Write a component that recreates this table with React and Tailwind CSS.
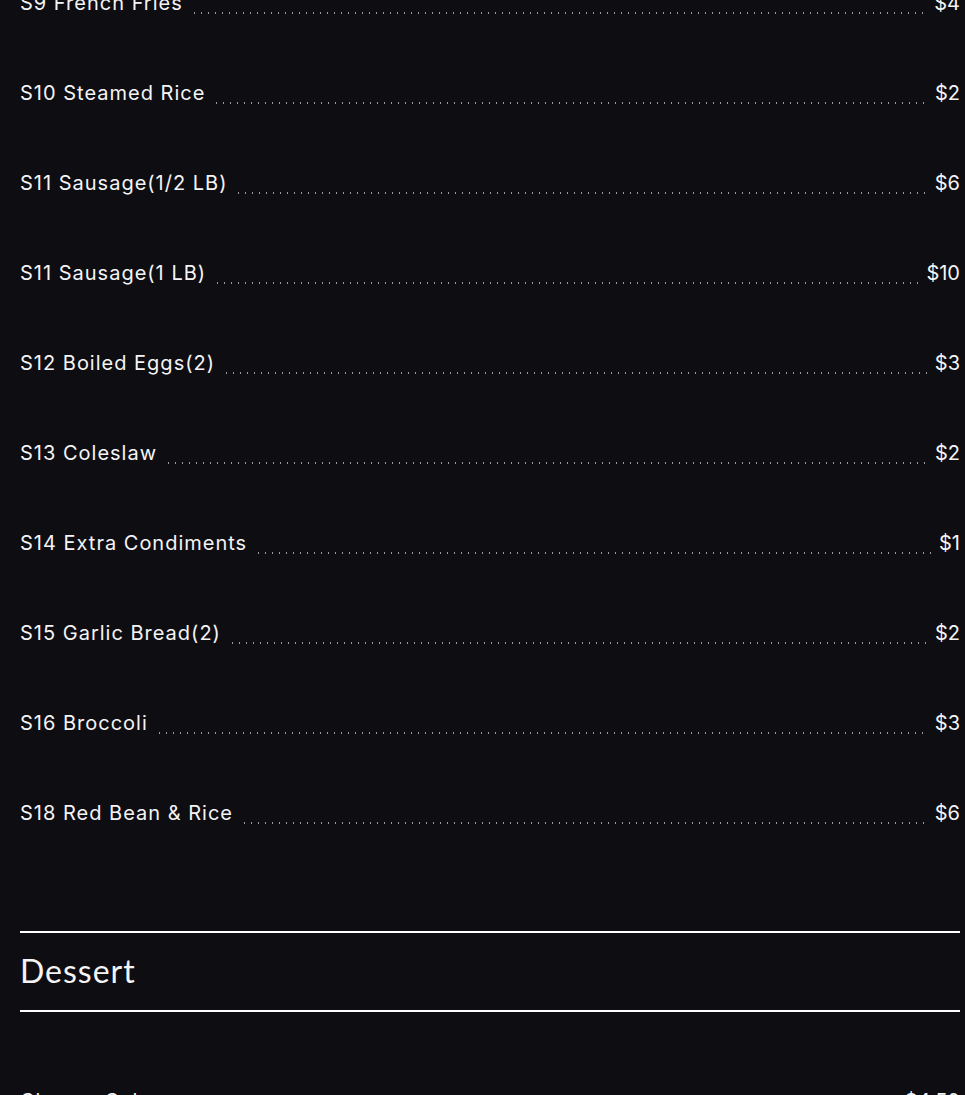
import React from 'react';

const sides = [
    { name: "S9 French Fries", price: "$4" },
    { name: "S10 Steamed Rice", price: "$2" },
    { name: "S11 Sausage(1/2 LB)", price: "$6" },
    { name: "S11 Sausage(1 LB)", price: "$10" },
    { name: "S12 Boiled Eggs(2)", price: "$3" },
    { name: "S13 Coleslaw", price: "$2" },
    { name: "S14 Extra Condiments", price: "$1" },
    { name: "S15 Garlic Bread(2)", price: "$2" },
    { name: "S16 Broccoli", price: "$3" },
    { name: "S18 Red Bean & Rice", price: "$6" },
];

const MenuRow = ({ name, price }) => (
    <div className="flex items-baseline h-[28px] leading-[28px] text-[20px] text-[#f4f4f5]">
        <span className="whitespace-nowrap tracking-[1px]">{name}</span>
        {/* dotted leader */}
        <div className="flex-1 mx-2 h-[2px] translate-y-[4px] bg-[radial-gradient(circle,#9a9a9f_0.75px,transparent_0.95px)] bg-[length:7px_2px] bg-repeat-x"></div>
        <span className="whitespace-nowrap">{price}</span>
    </div>
);

const App = () => {
    return (
        <div className="h-[1095px] overflow-hidden bg-[#0e0d12] font-['Inter',sans-serif]">
            <div className="pl-5 pr-[5px] -mt-[11px]">
                <div className="flex flex-col gap-[62px]">
                    {sides.map((item) => (
                        <MenuRow key={item.name} {...item} />
                    ))}
                </div>

                {/* Dessert section */}
                <div className="mt-[104px] border-t-2 border-b-2 border-white h-[81px] flex items-center">
                    <h2 className="text-[32px] leading-none tracking-[1px] text-[#f4f4f5] font-['Lato',sans-serif] -mt-[2px]">Dessert</h2>
                </div>

                <div className="mt-[75px] flex flex-col gap-[62px]">
                    <MenuRow name="Cheese Cake" price="$4.50" />
                </div>
            </div>
        </div>
    );
};

export default App;
